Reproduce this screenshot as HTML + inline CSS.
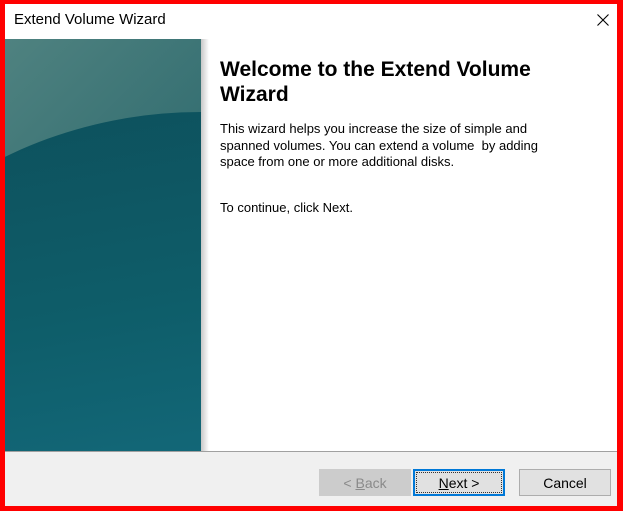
<!DOCTYPE html>
<html><head><style>
*{margin:0;padding:0;box-sizing:border-box}
html,body{overflow:hidden}
body{width:623px;height:511px;background:#f00;position:relative;font-family:"Liberation Sans",sans-serif}
.win{position:absolute;left:5px;top:4px;width:612px;height:502px;background:#fff;overflow:hidden}
.title{position:absolute;left:9px;top:7px;font-size:15px;color:#000}
.close{position:absolute;right:8px;top:10px}
.panel{position:absolute;left:0;top:35px;width:196px;height:412px;overflow:hidden;background:linear-gradient(135deg,#4f8280 0%,#2e6a6e 60%,#2a6468 100%)}
.dark{position:absolute;left:-204px;top:73px;width:800px;height:700px;border-radius:50%;background:linear-gradient(170deg,#0d4f5b 0%,#0e5d69 30%,#146a7c 55%)}
.shadow{position:absolute;left:196px;top:35px;width:8px;height:412px;background:linear-gradient(90deg,#c8c8c8,#fff)}
h1{position:absolute;left:215px;top:53px;font-size:21px;font-weight:bold;line-height:25px;width:340px}
p{position:absolute;left:215px;font-size:13px;line-height:16.5px;color:#000}
.foot{position:absolute;left:0;top:447px;width:612px;height:55px;background:#f0f0f0;border-top:1px solid #a0a0a0}
.btn{position:absolute;top:17px;width:92px;height:27px;font-size:14px;text-align:center;line-height:26px;border:1px solid #adadad;background:#e1e1e1}
</style></head><body>
<div class="win">
<div class="title">Extend Volume Wizard</div>
<svg class="close" width="12" height="12" viewBox="0 0 12 12"><path d="M0.5 0.5L11.5 11.5M11.5 0.5L0.5 11.5" stroke="#000" stroke-width="1.1"/></svg>
<div class="panel"><div class="dark"></div></div>
<div class="shadow"></div>
<h1>Welcome to the Extend Volume Wizard</h1>
<p style="top:117px">This wizard helps you increase the size of simple and<br>spanned volumes. You can extend a volume &nbsp;by adding<br>space from one or more additional disks.</p>
<p style="top:196px">To continue, click Next.</p>
<div class="foot">
<div class="btn" style="left:314px;background:#ccc;border-color:#ccc;color:#8a8a8a">&lt; <u>B</u>ack</div>
<div class="btn" style="left:408px;border:2px solid #0078d7;line-height:24px;outline:1px dotted #333;outline-offset:-4px"><u>N</u>ext &gt;</div>
<div class="btn" style="left:514px">Cancel</div>
</div>
</div>
</body></html>
